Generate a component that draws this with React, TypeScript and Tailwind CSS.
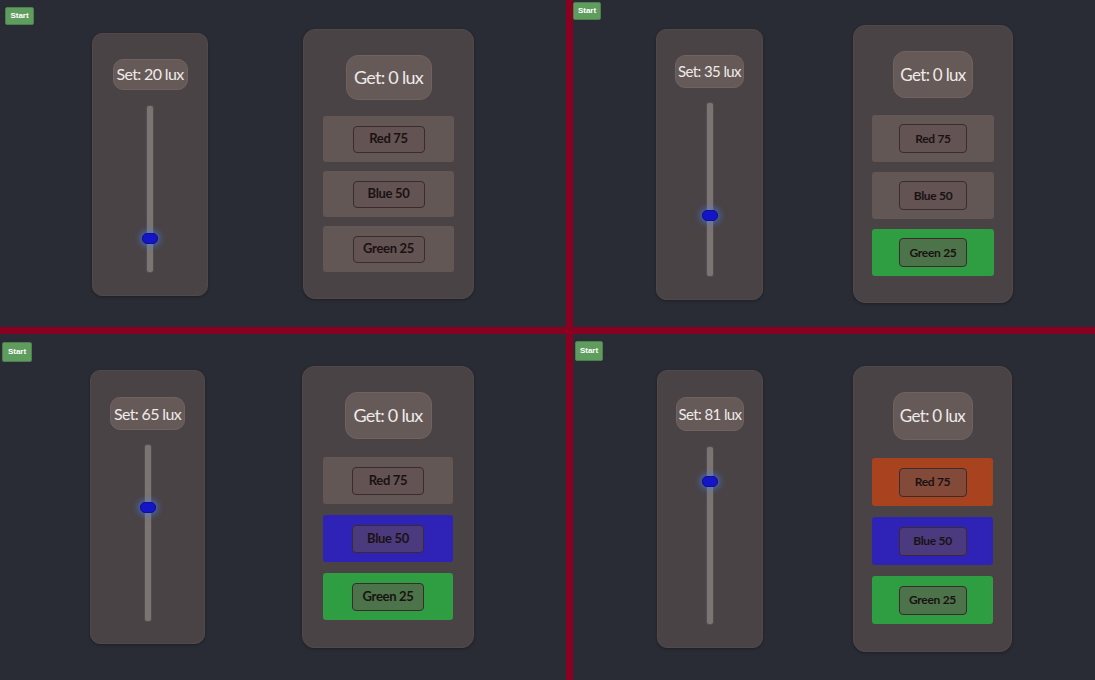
type Quad = {
  value: number;
  active: string[];
  wrap: string;
  start: string;
  row: string;
  sliderCard: string;
  setLabel: string;
  track: string;
  getCard: string;
  getLabel: string;
  rows: string;
  lamp: string;
  btn: string;
};

const LAMPS = [
  { key: "red", label: "Red 75", on: "bg-[#a9431f]" },
  { key: "blue", label: "Blue 50", on: "bg-[#2e23b6]" },
  { key: "green", label: "Green 25", on: "bg-[#2f9e42]" },
];

// each quadrant is the same page captured at a slightly different size
const QUADS: Quad[] = [
  {
    value: 20,
    active: [],
    wrap: "pt-[7px] pl-[5px]",
    start: "w-[29px] h-[18px]",
    row: "mt-[4px] pl-[87px] gap-[95px]",
    sliderCard: "w-[116px] h-[263px] pt-[25px]",
    setLabel: "w-[75px] h-[31px] text-[16px] mb-[15px]",
    track: "h-[168px]",
    getCard: "w-[171px] h-[270px] pt-[25px] px-[19px]",
    getLabel: "w-[86px] h-[45px] text-[18px] mb-[16px]",
    rows: "gap-[9px]",
    lamp: "h-[46px]",
    btn: "w-[72px] h-[27px] text-[13px]",
  },
  {
    value: 35,
    active: ["green"],
    wrap: "pt-[2px] pl-0",
    start: "w-[28px] h-[18px]",
    row: "mt-[5px] pl-[83px] gap-[90px]",
    sliderCard: "w-[107px] h-[271px] pt-[25px]",
    setLabel: "w-[69px] h-[33px] text-[15px] mb-[14px]",
    track: "h-[175px]",
    getCard: "w-[160px] h-[278px] pt-[25px] px-[18px]",
    getLabel: "w-[80px] h-[47px] text-[17px] mb-[17px]",
    rows: "gap-[10px]",
    lamp: "h-[47px]",
    btn: "w-[68px] h-[29px] text-[12px]",
  },
  {
    value: 65,
    active: ["blue", "green"],
    wrap: "pt-[8px] pl-[2px]",
    start: "w-[30px] h-[20px]",
    row: "mt-[4px] pl-[88px] gap-[97px]",
    sliderCard: "w-[115px] h-[274px] pt-[26px]",
    setLabel: "w-[75px] h-[33px] text-[16px] mb-[14px]",
    track: "h-[178px]",
    getCard: "w-[172px] h-[282px] pt-[25px] px-[20px]",
    getLabel: "w-[87px] h-[47px] text-[18px] mb-[18px]",
    rows: "gap-[11px]",
    lamp: "h-[47px]",
    btn: "w-[72px] h-[28px] text-[13px]",
  },
  {
    value: 81,
    active: ["red", "blue", "green"],
    wrap: "pt-[7px] pl-[2px]",
    start: "w-[28px] h-[20px]",
    row: "mt-[5px] pl-[82px] gap-[90px]",
    sliderCard: "w-[106px] h-[278px] pt-[26px]",
    setLabel: "w-[68px] h-[34px] text-[15px] mb-[15px]",
    track: "h-[179px]",
    getCard: "w-[159px] h-[286px] pt-[25px] px-[18px]",
    getLabel: "w-[80px] h-[48px] text-[17px] mb-[18px]",
    rows: "gap-[11px]",
    lamp: "h-[48px]",
    btn: "w-[68px] h-[29px] text-[12px]",
  },
];

function Quadrant({ q }: { q: Quad }) {
  return (
    <div className={`bg-[#292c34] overflow-hidden flex flex-col ${q.wrap}`}>
      <button
        className={`${q.start} shrink-0 rounded-[2px] border border-[#4c7f4c] bg-[#5f9d5f] font-['Liberation_Sans',sans-serif] text-[8px] font-bold text-white flex items-center justify-center`}
      >
        Start
      </button>

      <div className={`flex items-center ${q.row}`}>
        {/* Set slider */}
        <div
          className={`${q.sliderCard} rounded-[10px] border border-[#524849] bg-[#4a4345] shadow-[0_1px_3px_rgba(0,0,0,0.3)] flex flex-col items-center`}
        >
          <div
            className={`${q.setLabel} rounded-[10px] border border-[#6f6260] bg-[#665a58] text-[#eeeaea] tracking-[-0.04em] whitespace-nowrap flex items-center justify-center`}
          >
            Set: {q.value} lux
          </div>
          <div className={`${q.track} relative w-[8px] rounded-[3px] border border-[#554d4d] bg-[#7a7473]`}>
            <div
              className="absolute left-1/2 -translate-x-1/2 w-[16px] h-[11px] rounded-[5px] border border-[#10108a] bg-[#1414c8] shadow-[0_0_6px_2px_rgba(70,130,255,0.55)]"
              style={{ bottom: `calc(${q.value}% - 6px)` }}
            />
          </div>
        </div>

        {/* Get + lamps */}
        <div
          className={`${q.getCard} rounded-[12px] border border-[#524849] bg-[#4a4345] shadow-[0_1px_3px_rgba(0,0,0,0.3)] flex flex-col items-center`}
        >
          <div
            className={`${q.getLabel} rounded-[12px] border border-[#6f6260] bg-[#665a58] text-[#eeeaea] tracking-[-0.04em] whitespace-nowrap flex items-center justify-center`}
          >
            Get: 0 lux
          </div>
          <div className={`w-full flex flex-col ${q.rows}`}>
            {LAMPS.map((l) => (
              <div
                key={l.key}
                className={`${q.lamp} rounded-[3px] flex items-center justify-center ${
                  q.active.includes(l.key) ? l.on : "bg-[#625755]"
                }`}
              >
                <div
                  className={`${q.btn} rounded-[4px] border border-[#3a2c2c] bg-[#645050]/55 font-bold tracking-tight text-[#1a1212] flex items-center justify-center`}
                >
                  {l.label}
                </div>
              </div>
            ))}
          </div>
        </div>
      </div>
    </div>
  );
}

export default function App() {
  return (
    <div className="w-[1095px] h-[680px] bg-[#8a0020] font-['Lato',sans-serif] grid grid-cols-[566px_1fr] grid-rows-[327px_1fr] gap-[7px]">
      {QUADS.map((q, i) => (
        <Quadrant key={i} q={q} />
      ))}
    </div>
  );
}
